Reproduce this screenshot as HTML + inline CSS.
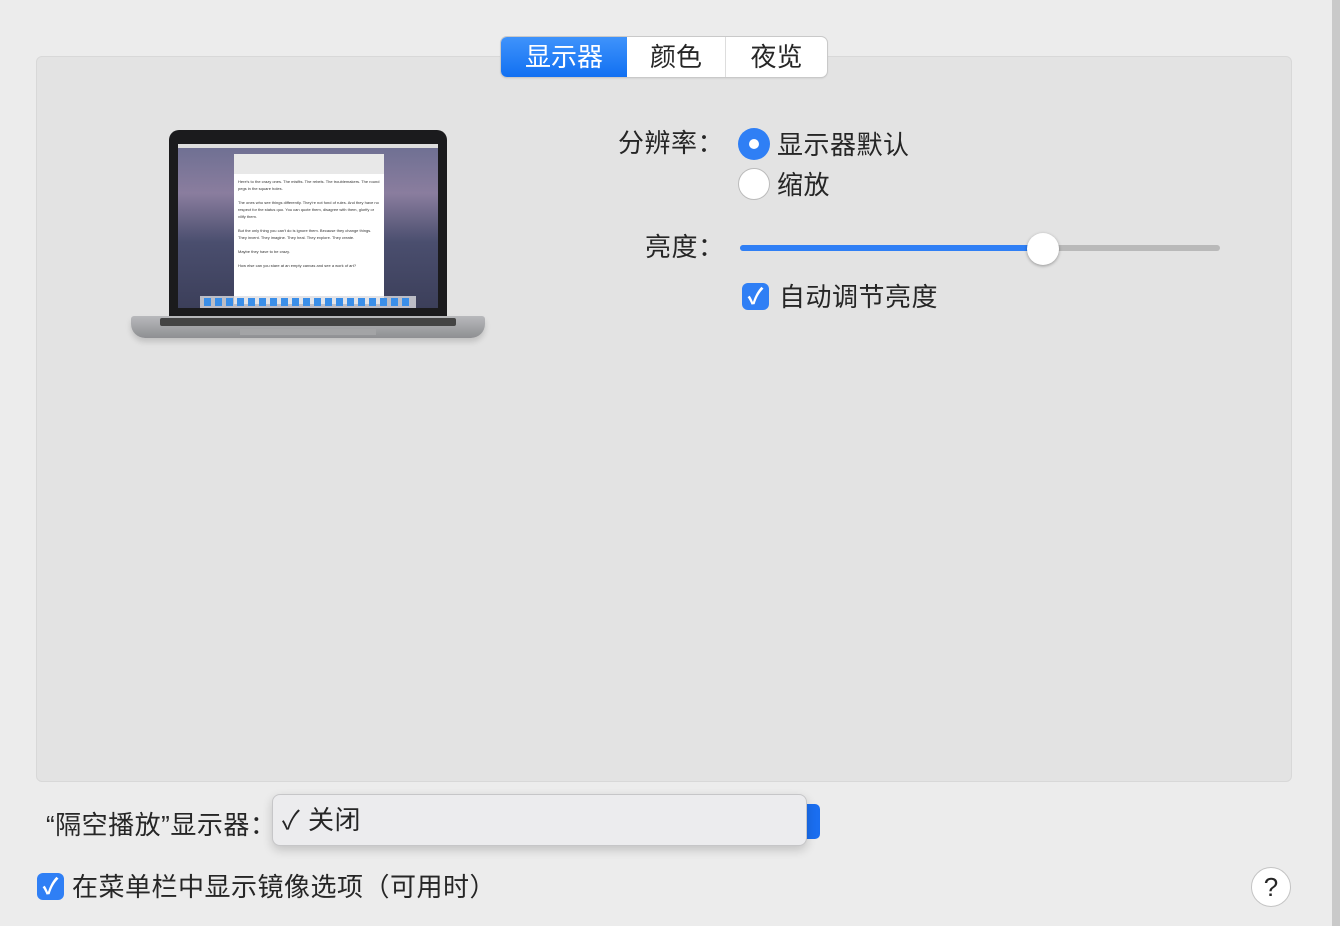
<!DOCTYPE html>
<html><head><meta charset="utf-8"><style>
*{margin:0;padding:0;box-sizing:border-box}
body{width:1340px;height:926px;background:#ececec;position:relative;overflow:hidden;font-family:"Liberation Sans","Noto Sans CJK SC",sans-serif;color:#262626}
.abs{position:absolute}
.t{font-size:26px;line-height:30px;white-space:nowrap;letter-spacing:0.5px}
.panel{left:36px;top:56px;width:1256px;height:726px;background:#e3e3e3;border:1px solid #d8d8d8;border-radius:6px}
.seg{left:501px;top:37px;width:326px;height:40px;background:#fff;border-radius:6px;box-shadow:0 0 0 1px #c9c9c9,0 1px 2px rgba(0,0,0,.15);display:flex;overflow:hidden}
.seg div{font-size:26px;line-height:40px;text-align:center}
.cb{width:27px;height:27px;border-radius:6px;background:#2f7ff5;color:#fff;font-size:22px;line-height:27px;text-align:center;font-weight:bold}
</style></head><body>
<div class="abs" style="left:1332px;top:0;width:8px;height:926px;background:#c9c9c9"></div>
<div class="abs panel"></div>
<div class="abs seg">
<div style="width:126px;background:linear-gradient(#3f93fb,#1170f2);color:#fff">显示器</div>
<div style="width:99px;border-right:1px solid #ddd">颜色</div>
<div style="width:101px">夜览</div>
</div>
<!-- laptop -->
<div class="abs" style="left:169px;top:130px;width:278px;height:190px;background:#1b1b1d;border-radius:10px 10px 0 0"></div>
<div class="abs" style="left:178px;top:144px;width:260px;height:164px;background:linear-gradient(180deg,#6d6f92 0%,#8a7d9e 30%,#4a4e6e 60%,#3c3f5a 100%)"></div>
<div class="abs" style="left:178px;top:144px;width:260px;height:4px;background:#ddd"></div>
<div class="abs" style="left:234px;top:154px;width:150px;height:150px;background:#fff;font-size:4px;line-height:7px;padding:24px 4px;color:#333">Here's to the crazy ones. The misfits. The rebels. The troublemakers. The round pegs in the square holes.<br><br>The ones who see things differently. They're not fond of rules. And they have no respect for the status quo. You can quote them, disagree with them, glorify or vilify them.<br><br>But the only thing you can't do is ignore them. Because they change things. They invent. They imagine. They heal. They explore. They create.<br><br>Maybe they have to be crazy.<br><br>How else can you stare at an empty canvas and see a work of art?</div>
<div class="abs" style="left:234px;top:154px;width:150px;height:20px;background:#e8e8e8"></div>
<div class="abs" style="left:200px;top:296px;width:216px;height:12px;background:rgba(220,220,225,.8)"></div>
<div class="abs" style="left:204px;top:298px;width:208px;height:8px;background:repeating-linear-gradient(90deg,#3a8ee8 0 7px,transparent 7px 11px)"></div>
<div class="abs" style="left:131px;top:316px;width:354px;height:22px;background:linear-gradient(#b8b9bc,#8e8f92);border-radius:3px 3px 14px 14px;box-shadow:0 4px 6px rgba(0,0,0,.15)"></div>
<div class="abs" style="left:160px;top:318px;width:296px;height:8px;background:#444;border-radius:2px"></div>
<div class="abs" style="left:240px;top:329px;width:136px;height:6px;background:#a3a4a6"></div>
<!-- right controls -->
<div class="abs t" style="left:618px;top:128px">分辨率：</div>
<div class="abs" style="left:738px;top:128px;width:32px;height:32px;border-radius:50%;background:#2f7ff5"></div>
<div class="abs" style="left:749px;top:139px;width:10px;height:10px;border-radius:50%;background:#fff"></div>
<div class="abs t" style="left:777px;top:130px">显示器默认</div>
<div class="abs" style="left:738px;top:168px;width:32px;height:32px;border-radius:50%;background:#fff;border:1px solid #bbb"></div>
<div class="abs t" style="left:777px;top:170px">缩放</div>
<div class="abs t" style="left:645px;top:232px">亮度：</div>
<div class="abs" style="left:740px;top:245px;width:480px;height:6px;border-radius:3px;background:#b9b9b9"></div>
<div class="abs" style="left:740px;top:245px;width:300px;height:6px;border-radius:3px;background:#2f7ff5"></div>
<div class="abs" style="left:1027px;top:233px;width:32px;height:32px;border-radius:50%;background:#fff;box-shadow:0 1px 3px rgba(0,0,0,.35)"></div>
<div class="abs cb" style="left:742px;top:283px">✓</div>
<div class="abs t" style="left:779px;top:282px">自动调节亮度</div>
<!-- bottom -->
<div class="abs t" style="left:46px;top:810px">“隔空播放”显示器：</div>
<div class="abs" style="left:790px;top:804px;width:30px;height:35px;background:#1a6ef0;border-radius:5px"></div>
<div class="abs" style="left:272px;top:794px;width:535px;height:52px;background:#ececee;border:1px solid #c6c6c8;border-radius:8px;box-shadow:0 4px 10px rgba(0,0,0,.18)"></div>
<div class="abs t" style="left:282px;top:805px">✓ 关闭</div>
<div class="abs cb" style="left:37px;top:873px">✓</div>
<div class="abs t" style="left:72px;top:872px">在菜单栏中显示镜像选项（可用时）</div>
<div class="abs" style="left:1251px;top:867px;width:40px;height:40px;border-radius:50%;background:#fff;border:1px solid #c4c4c4;font-size:26px;line-height:38px;text-align:center">?</div>
</body></html>
